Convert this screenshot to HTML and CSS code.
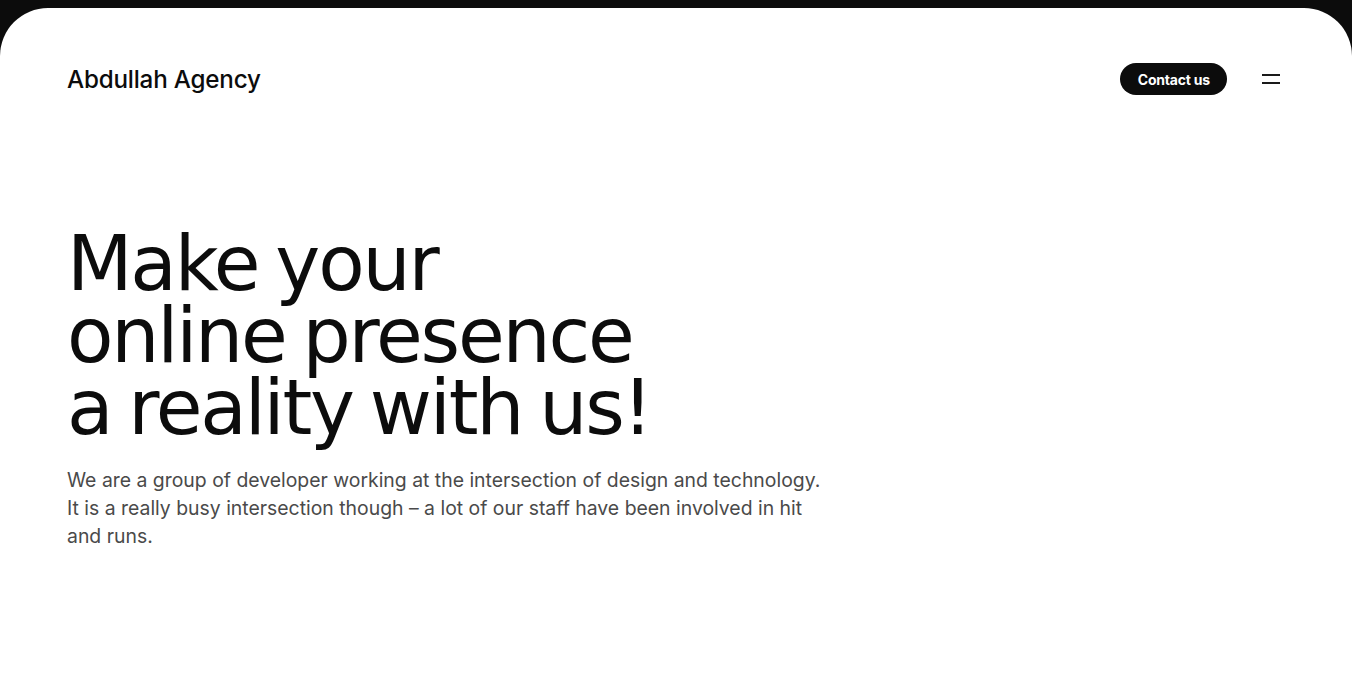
FILE: index.html
```html
<!DOCTYPE html>
<html lang="en">
<head>
    <meta charset="UTF-8">
    <meta name="viewport" content="width=device-width, initial-scale=1.0">
    <title>Abdullah Agency</title>
    <link rel="stylesheet" href="styles.css">
</head>
<body>
    <div class="scroller">
        <div class="page">
            <header class="topbar">
                <a class="logo" href="#">Abdullah Agency</a>
                <nav class="actions">
                    <a class="contact-btn" href="#">Contact us</a>
                    <button class="menu-btn" aria-label="Menu">
                        <span></span>
                        <span></span>
                    </button>
                </nav>
            </header>

            <section class="hero">
                <h1>Make your<br>online presence<br>a reality with us!</h1>
                <p class="intro">We are a group of developer working at the intersection of design and technology. It is a really busy intersection though &ndash; a lot of our staff have been involved in hit and runs.</p>
            </section>
        </div>
    </div>
</body>
</html>
```

FILE: styles.css
```css
html, body {
    margin: 0;
    padding: 0;
    height: 100%;
    overflow: hidden;
    background: #0c0c0c;
}

body {
    font-family: Inter, 'Noto Sans', sans-serif;
    color: #0c0c0c;
}

.scroller {
    height: 100vh;
    overflow-y: scroll;
}

.scroller::-webkit-scrollbar {
    width: 3px;
}

.scroller::-webkit-scrollbar-track {
    background: #efefef;
}

.scroller::-webkit-scrollbar-thumb {
    background: #c4c4c4;
}

.page {
    margin-top: 8px;
    min-height: 5800px;
    background: #fff;
    border-radius: 48px 48px 0 0;
    padding: 0 72px 0 67px;
}

.topbar {
    display: flex;
    align-items: center;
    justify-content: space-between;
    height: 142px;
}

.logo {
    font-size: 24.2px;
    font-weight: 500;
    letter-spacing: -0.2px;
    color: #0c0c0c;
    text-decoration: none;
}

.actions {
    display: flex;
    align-items: center;
    gap: 35px;
}

.contact-btn {
    display: inline-flex;
    align-items: center;
    justify-content: center;
    height: 32px;
    padding: 0 17px 0 18px;
    border-radius: 16px;
    background: #0c0c0c;
    color: #fff;
    font-size: 14px;
    font-weight: 700;
    letter-spacing: -0.2px;
    text-decoration: none;
}

.menu-btn {
    display: flex;
    flex-direction: column;
    gap: 6px;
    width: 18px;
    padding: 0;
    border: none;
    background: none;
    cursor: pointer;
}

.menu-btn span {
    display: block;
    height: 2px;
    background: #1a1a1a;
}

.hero {
    padding-top: 78px;
}

.hero h1 {
    margin: 0;
    font-family: 'DejaVu Sans', sans-serif;
    font-size: 76px;
    font-weight: 400;
    line-height: 72px;
    letter-spacing: -2.2px;
    word-spacing: -5px;
}

.intro {
    margin: 22px 0 0;
    max-width: 760px;
    font-size: 19.4px;
    line-height: 28px;
    color: #4a4a4a;
}
```
